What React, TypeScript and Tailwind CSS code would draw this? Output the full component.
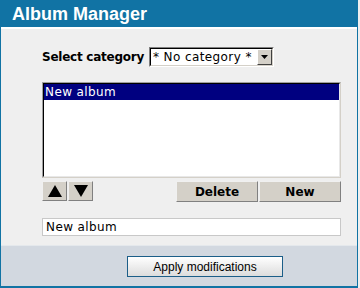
import React from "react";

const verdana = { fontFamily: '"DejaVu Sans", Verdana, sans-serif' };
const arial = { fontFamily: '"Liberation Sans", Arial, sans-serif' };

export default function App() {
  return (
    <div className="w-[360px] h-[288px] bg-[#efefef]">
      <div className="w-[358px] h-[288px] flex flex-col border-x border-[#1173a4]">
        <div
          className="h-[28px] bg-[#1173a4] text-white font-bold text-[18px] leading-[28px] pl-[11px] border-b border-white"
          style={arial}
        >
          Album Manager
        </div>
        <div className="h-[1px] bg-white" />
        <div className="flex-1 bg-[#efefef] pl-[41px] pr-[16px] pt-[18px] flex flex-col">
          <div className="flex items-center h-[20px]">
            <div className="w-[107px] shrink-0 whitespace-nowrap text-[12px] font-bold text-black tracking-[-0.25px]" style={verdana}>
              Select category
            </div>
            <div className="flex shrink-0 h-[20px] w-[125px] bg-white border border-t-[#808080] border-l-[#808080] border-b-white border-r-white">
              <div className="flex-1 border border-t-black border-l-black border-b-[#d4d0c8] border-r-[#d4d0c8] flex items-center pl-[2px] text-[12px] text-black whitespace-nowrap tracking-[0.4px]" style={verdana}>
                * No category *
                <div className="ml-auto shrink-0 w-[15px] h-[16px] bg-[#d4d0c8] border border-t-white border-l-white border-b-[#404040] border-r-[#404040] flex items-center justify-center">
                  <svg width="7" height="4" viewBox="0 0 7 4"><path d="M0 0h7L3.5 4z" fill="black" /></svg>
                </div>
              </div>
            </div>
          </div>
          <div className="mt-[15px] h-[96px] border border-t-[#a0a0a0] border-l-[#a0a0a0] border-b-[#d4d0c8] border-r-[#d4d0c8]">
            <div className="h-full bg-white border border-t-black border-l-black border-b-[#e8e8e8] border-r-[#e8e8e8]">
              <div className="h-[16px] bg-[#000080] text-white text-[12px] leading-[16px] pl-[1px] tracking-[0.4px]" style={verdana}>
                New album
              </div>
            </div>
          </div>
          <div className="mt-[3px] flex h-[21px]">
            <div className="w-[25px] h-[20px] bg-[#d4d0c8] border border-t-[#f0f0f0] border-l-[#f0f0f0] border-b-[#808080] border-r-[#808080] flex items-center justify-center">
              <svg width="14" height="12" viewBox="0 0 14 12"><path d="M7 0L14 12H0z" fill="black" /></svg>
            </div>
            <div className="ml-[1px] w-[25px] h-[20px] bg-[#d4d0c8] border border-t-[#f0f0f0] border-l-[#f0f0f0] border-b-[#808080] border-r-[#808080] flex items-center justify-center">
              <svg width="14" height="12" viewBox="0 0 14 12"><path d="M0 0H14L7 12z" fill="black" /></svg>
            </div>
            <div className="ml-auto w-[82px] h-[21px] bg-[#d4d0c8] border border-t-[#f0f0f0] border-l-[#f0f0f0] border-b-[#808080] border-r-[#808080] flex items-center justify-center text-[12px] font-bold text-black" style={verdana}>
              Delete
            </div>
            <div className="ml-[1px] w-[82px] h-[21px] bg-[#d4d0c8] border border-t-[#f0f0f0] border-l-[#f0f0f0] border-b-[#808080] border-r-[#808080] flex items-center justify-center text-[12px] font-bold text-black" style={verdana}>
              New
            </div>
          </div>
          <div className="mt-[16px] h-[18px] bg-white border border-[#c8c8c8] text-[12px] leading-[16px] pl-[3px] text-black tracking-[0.4px]" style={verdana}>
            New album
          </div>
        </div>
        <div className="h-[43px] bg-[#d2d8e0] border-t border-[#e4e8ec] flex justify-center pt-[10px] border-b-2 border-b-[#1173a4]">
          <div className="ml-[52px] w-[156px] h-[21px] border border-[#1b5e88] bg-gradient-to-b from-white to-[#dcdcdc] flex items-center justify-center text-[12px] text-black" style={arial}>
            Apply modifications
          </div>
        </div>
      </div>
    </div>
  );
}
